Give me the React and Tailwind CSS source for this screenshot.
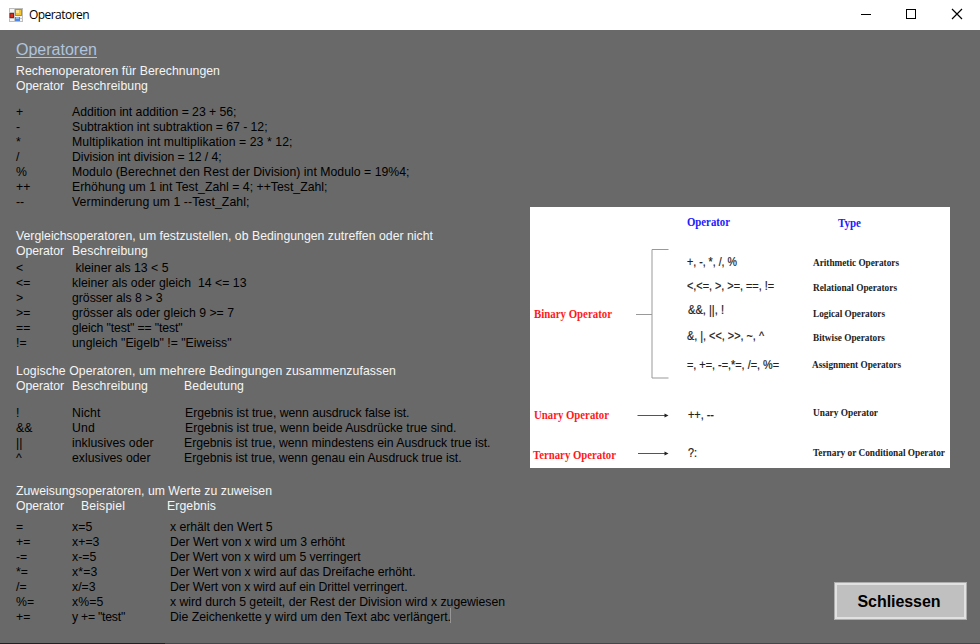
import { useLayoutEffect, useRef, useState } from "react";

// A single line of text, spaced out to fill exactly `w` pixels.
function Line({ w, children }) {
  const ref = useRef(null);
  const [gap, setGap] = useState(0);
  useLayoutEffect(() => {
    const natural = ref.current.getBoundingClientRect().width;
    if (w) setGap((w - natural) / children.length);
  }, []);
  return (
    <span ref={ref} className="inline-block whitespace-pre" style={{ letterSpacing: gap + "px" }}>
      {children}
    </span>
  );
}

const arithmetic = [
  ["+", "Addition int addition = 23 + 56;", 164.5],
  ["-", "Subtraktion int subtraktion = 67 - 12;", 195.5],
  ["*", "Multiplikation int multiplikation = 23 * 12;", 220.5],
  ["/", "Division int division = 12 / 4;", 149.5],
  ["%", "Modulo (Berechnet den Rest der Division) int Modulo = 19%4;", 337.5],
  ["++", "Erhöhung um 1 int Test_Zahl = 4; ++Test_Zahl;", 255.5],
  ["--", "Verminderung um 1 --Test_Zahl;", 177.5],
];

const comparison = [
  ["<", " kleiner als 13 < 5", 96.5],
  ["<=", "kleiner als oder gleich  14 <= 13", 174.5],
  [">", "grösser als 8 > 3", 90.5],
  [">=", "grösser als oder gleich 9 >= 7", 162],
  ["==", 'gleich "test" == "test"', 110.5],
  ["!=", 'ungleich "Eigelb" != "Eiweiss"', 159.5],
];

const logical = [
  ["!", "Nicht", 28.5, "Ergebnis ist true, wenn ausdruck false ist.", 224.5, true],
  ["&&", "Und", 23, "Ergebnis ist true, wenn beide Ausdrücke true sind.", 271.5, true],
  ["||", "inklusives oder", 81.5, "Ergebnis ist true, wenn mindestens ein Ausdruck true ist.", 306.5, false],
  ["^", "exlusives oder", 78.5, "Ergebnis ist true, wenn genau ein Ausdruck true ist.", 277.5, false],
];

const assignment = [
  ["=", "x=5", 20.5, "x erhält den Wert 5", 102.5],
  ["+=", "x+=3", 27.5, "Der Wert von x wird um 3 erhöht", 175],
  ["-=", "x-=5", 24.5, "Der Wert von x wird um 5 verringert", 190.5],
  ["*=", "x*=3", 25.5, "Der Wert von x wird auf das Dreifache erhöht.", 245.5],
  ["/=", "x/=3", 23.5, "Der Wert von x wird auf ein Drittel verringert.", 237.5],
  ["%=", "x%=5", 31.5, "x wird durch 5 geteilt, der Rest der Division wird x zugewiesen", 335],
  ["+=", 'y += "test"', 53, "Die Zeichenkette y wird um den Text abc verlängert.", 281],
];

function AppIcon() {
  return (
    <svg className="h-[14px] w-[14px]" viewBox="0 0 14 14">
      <rect x="0.5" y="0.5" width="13" height="13" fill="#f5f5f5" stroke="#bdbdbd" />
      <path d="M5.5 0v14M0 4.5h6M0 10.5h14" stroke="#c4c4c4" />
      <rect x="6.5" y="1.5" width="6" height="6" fill="#f5c432" stroke="#c29218" />
      <rect x="7" y="2" width="3" height="3" fill="#ffe78a" />
      <rect x="1" y="5.5" width="3.5" height="4" fill="#d3321f" stroke="#9f1511" />
      <rect x="6" y="9" width="5" height="4" fill="#4f86e6" />
      <rect x="7" y="9" width="3" height="2" fill="#8dbcfa" />
    </svg>
  );
}

function TitleBar() {
  return (
    <header className="flex h-[30px] items-center bg-white pl-[9px] text-black">
      <AppIcon />
      <span className="ml-[6px] font-['Open_Sans','Noto_Sans',sans-serif] text-[12px] leading-[16px]">
        <Line w={60}>Operatoren</Line>
      </span>
      <div className="ml-auto flex">
        <svg className="h-[30px] w-[138px]" viewBox="0 0 138 30" fill="none" stroke="#000" shapeRendering="crispEdges">
          <path d="M19 14.5h10" />
          <rect x="64.5" y="9.5" width="9" height="9" />
          <path d="M110 9l10 10M120 9l-10 10" strokeWidth="1.2" shapeRendering="auto" />
        </svg>
      </div>
    </header>
  );
}

const diagramHeads = [
  [4, 111, "Binary Operator", 78],
  [4, 212, "Unary Operator", 75],
  [3, 252, "Ternary Operator", 83],
];
const diagramSymbols = [
  [157, 59, "+, -, *, /, %", 50],
  [157, 83, "<,<=, >, >=, ==, !=", 87],
  [158, 107, "&&, ||, !", 36],
  [157, 133, "&, |, <<, >>, ~, ^", 77],
  [157, 162, "=, +=, -=,*=, /=, %=", 92],
  [158, 212, "++, --", 26],
  [158, 250, "?:", 9],
];
const diagramTypes = [
  [283, 59, "Arithmetic Operators", 86],
  [283, 84, "Relational Operators", 84],
  [283, 110, "Logical Operators", 72],
  [283, 134, "Bitwise Operators", 72],
  [282, 161, "Assignment Operators", 89],
  [283, 209, "Unary Operator", 65],
  [283, 249, "Ternary or Conditional Operator", 132],
];

function DiagramTexts({ items, className }) {
  return (
    <g className={className}>
      {items.map(([x, y, text, w]) => (
        <text key={text} x={x} y={y} textLength={w} lengthAdjust="spacingAndGlyphs">
          {text}
        </text>
      ))}
    </g>
  );
}

function OperatorDiagram() {
  return (
    <svg className="h-[261px] w-[420px] overflow-visible bg-white" viewBox="0 0 420 261">
      <DiagramTexts
        className="fill-[#2020ff] font-['Liberation_Serif',serif] text-[11.5px] font-bold"
        items={[
          [157, 19, "Operator", 43],
          [308, 20, "Type", 23],
        ]}
      />
      <DiagramTexts className="fill-[#ff1a1a] font-['Liberation_Serif',serif] text-[11.5px] font-bold" items={diagramHeads} />
      <DiagramTexts
        className="fill-[#222] stroke-[#222] stroke-[0.2] font-['Liberation_Sans',sans-serif] text-[12px]"
        items={diagramSymbols}
      />
      <DiagramTexts className="fill-[#1c1c1c] font-['Liberation_Serif',serif] text-[10px] font-bold" items={diagramTypes} />
      <path d="M138.5 42.5h-16.500v128.500h16.500M106 107.500h16" fill="none" stroke="#999" />
      <path d="M107.500 208.500h28M108 246.500h28" stroke="#555" />
      <path d="M134.500 206.500l4 2l-4 2zM134.500 244.500l4 2l-4 2z" fill="#222" />
    </svg>
  );
}

function TwoColumns({ rows }) {
  return rows.map(([op, text, w], i) => (
    <div key={i} className="flex h-[15px]">
      <span className="w-14">{op}</span>
      <Line w={w}>{text}</Line>
    </div>
  ));
}

export default function App() {
  return (
    <div className="flex h-[644px] w-[980px] flex-col overflow-hidden bg-[#696969] font-['Liberation_Sans',Arial,sans-serif] text-[12.25px] leading-[15px] text-black">
      <TitleBar />
      <main className="flex h-[613px] pl-4">
        <div className="w-[514px] pt-[10px]">
          <div className="h-[24px]">
            <h1 className="h-[18px] w-[81px] border-b border-[#b0c4de] text-[16px] leading-[20px] text-[#b0c4de]">
              <Line w={81}>Operatoren</Line>
            </h1>
          </div>

          <section className="h-[165px]">
            <div className="text-[#f5f5f5]">
              <div className="h-[15px]"><Line w={204}>Rechenoperatoren für Berechnungen</Line></div>
              <div className="flex h-[15px]">
                <span className="w-14"><Line w={48}>Operator</Line></span>
                <Line w={76}>Beschreibung</Line>
              </div>
            </div>
            <div className="pt-[11px]"><TwoColumns rows={arithmetic} /></div>
          </section>

          <section className="h-[135px]">
            <div className="text-[#f5f5f5]">
              <div className="h-[15px]">
                <Line w={417}>Vergleichsoperatoren, um festzustellen, ob Bedingungen zutreffen oder nicht</Line>
              </div>
              <div className="flex h-[15px]">
                <span className="w-14"><Line w={48}>Operator</Line></span>
                <Line w={76}>Beschreibung</Line>
              </div>
            </div>
            <div className="pt-[2px]"><TwoColumns rows={comparison} /></div>
          </section>

          <section className="h-[120px]">
            <div className="text-[#f5f5f5]">
              <div className="h-[15px]">
                <Line w={380}>Logische Operatoren, um mehrere Bedingungen zusammenzufassen</Line>
              </div>
              <div className="flex h-[15px]">
                <span className="w-14"><Line w={48}>Operator</Line></span>
                <span className="w-28"><Line w={76}>Beschreibung</Line></span>
                <Line w={60}>Bedeutung</Line>
              </div>
            </div>
            <div className="pt-3">
              {logical.map(([op, name, nw, text, w, shifted]) => (
                <div key={op} className="flex h-[15px]">
                  <span className="w-14">{op}</span>
                  <span className={shifted ? "w-[113px]" : "w-28"}><Line w={nw}>{name}</Line></span>
                  <Line w={w}>{text}</Line>
                </div>
              ))}
            </div>
          </section>

          <section>
            <div className="text-[#f5f5f5]">
              <div className="h-[15px]"><Line w={256}>Zuweisungsoperatoren, um Werte zu zuweisen</Line></div>
              <div className="flex h-[15px]">
                <span className="w-[65px]"><Line w={48}>Operator</Line></span>
                <span className="w-[86px]"><Line w={44}>Beispiel</Line></span>
                <Line w={49}>Ergebnis</Line>
              </div>
            </div>
            <div className="pt-[6px]">
              {assignment.map(([op, example, ew, text, w], i) => (
                <div key={i} className="flex h-[15px]">
                  <span className="w-14">{op}</span>
                  <span className="w-[98px]"><Line w={ew}>{example}</Line></span>
                  <Line w={w}>{text}</Line>
                  {i === assignment.length - 1 && <i className="-mt-[2px] -ml-px h-[15px] w-px bg-[#969696]" />}
                </div>
              ))}
            </div>
          </section>
        </div>

        <div className="flex flex-1 flex-col pt-[177px]">
          <OperatorDiagram />
          <button className="mt-[114px] mr-[13px] ml-auto flex h-[38px] w-[133px] items-center justify-center border border-[#adadad] bg-[#c0c0c0] pr-[3px] text-[16px] font-bold shadow-[inset_0_0_0_2px_#e1e1e1]">
            <Line w={83}>Schliessen</Line>
          </button>
        </div>
      </main>
      <div className="flex h-px">
        <div className="w-[165px] bg-[#241f22]" />
        <div className="flex-1 bg-[#45454b]" />
      </div>
    </div>
  );
}
